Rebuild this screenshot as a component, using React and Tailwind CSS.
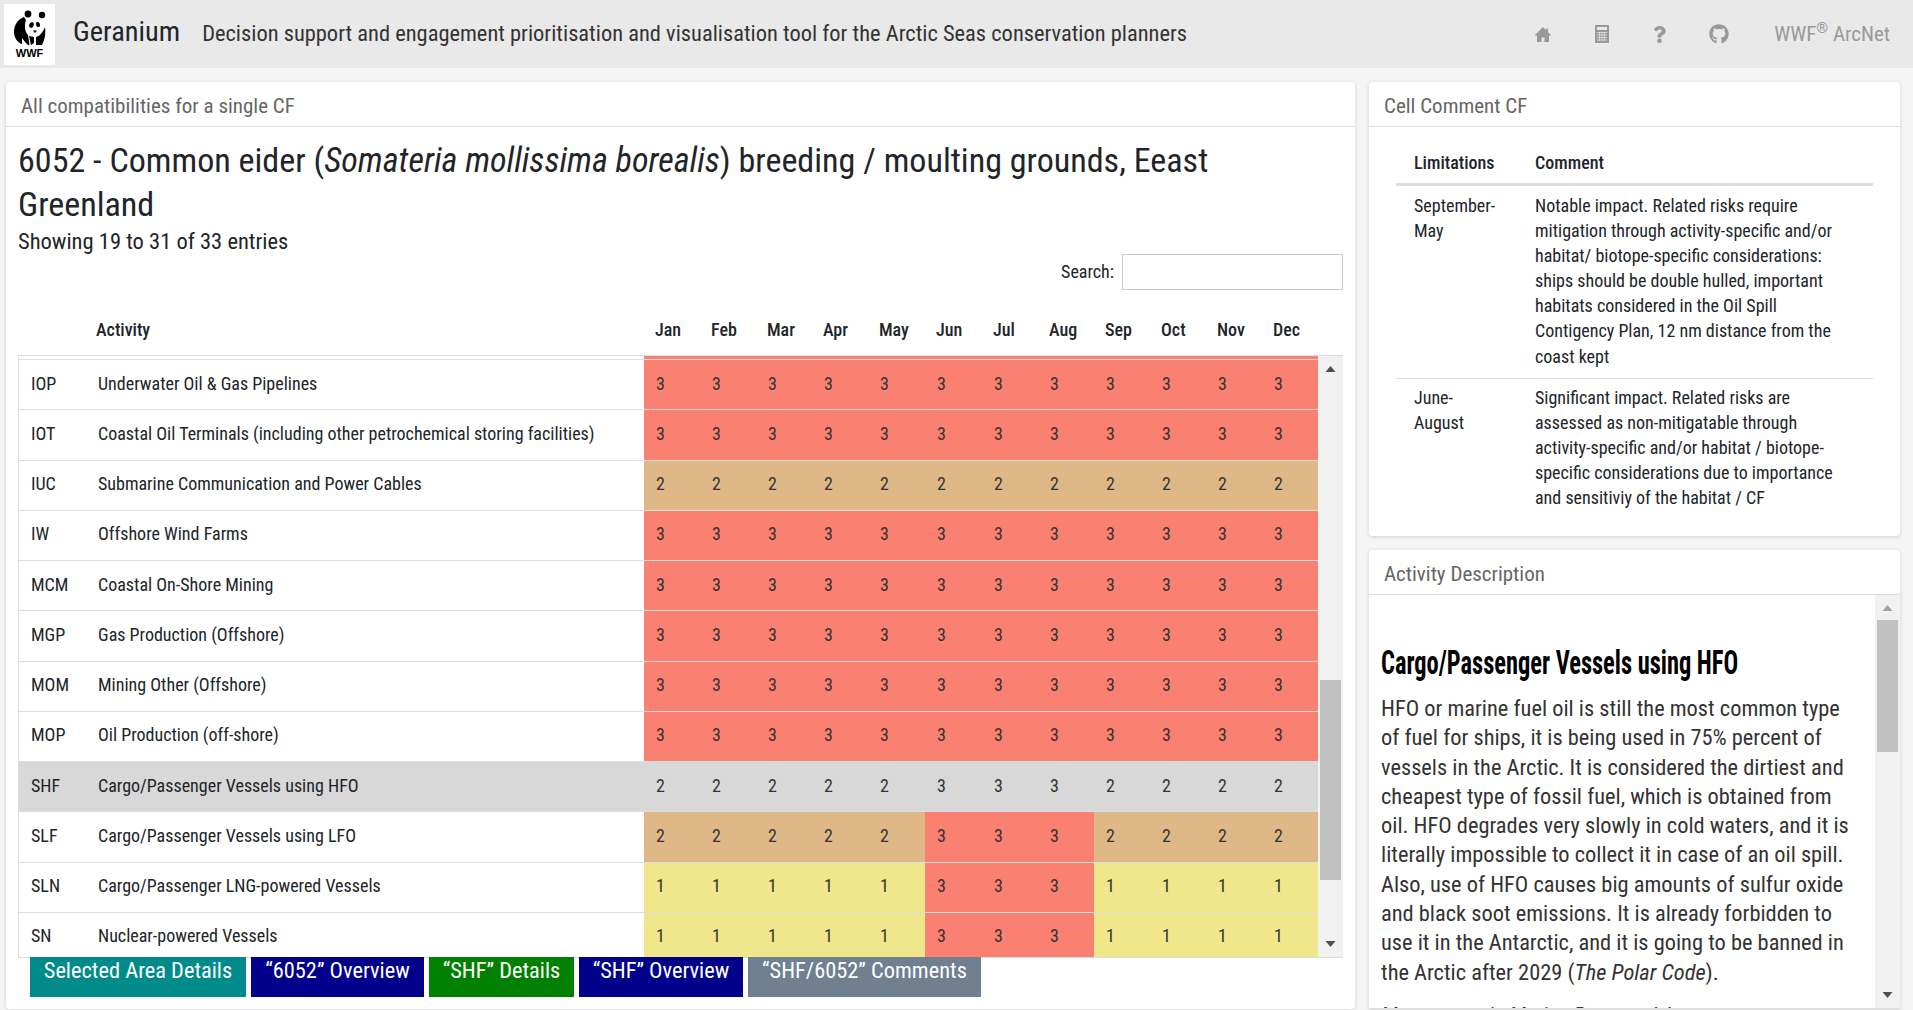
import React from "react";
import { FaQuestion, FaGithub } from "react-icons/fa";

const months = ["Jan","Feb","Mar","Apr","May","Jun","Jul","Aug","Sep","Oct","Nov","Dec"];
const monthW = ["w-[56px]","w-[56px]","w-[56px]","w-[56px]","w-[57px]","w-[57px]","w-[56px]","w-[56px]","w-[56px]","w-[56px]","w-[56px]","w-[56px]"];
const rows = [
  ["IOP","Underwater Oil & Gas Pipelines",[3,3,3,3,3,3,3,3,3,3,3,3]],
  ["IOT","Coastal Oil Terminals (including other petrochemical storing facilities)",[3,3,3,3,3,3,3,3,3,3,3,3]],
  ["IUC","Submarine Communication and Power Cables",[2,2,2,2,2,2,2,2,2,2,2,2]],
  ["IW","Offshore Wind Farms",[3,3,3,3,3,3,3,3,3,3,3,3]],
  ["MCM","Coastal On-Shore Mining",[3,3,3,3,3,3,3,3,3,3,3,3]],
  ["MGP","Gas Production (Offshore)",[3,3,3,3,3,3,3,3,3,3,3,3]],
  ["MOM","Mining Other (Offshore)",[3,3,3,3,3,3,3,3,3,3,3,3]],
  ["MOP","Oil Production (off-shore)",[3,3,3,3,3,3,3,3,3,3,3,3]],
  ["SHF","Cargo/Passenger Vessels using HFO",[2,2,2,2,2,3,3,3,2,2,2,2],true],
  ["SLF","Cargo/Passenger Vessels using LFO",[2,2,2,2,2,3,3,3,2,2,2,2]],
  ["SLN","Cargo/Passenger LNG-powered Vessels",[1,1,1,1,1,3,3,3,1,1,1,1]],
  ["SN","Nuclear-powered Vessels",[1,1,1,1,1,3,3,3,1,1,1,1]],
];
const cellBg = { 1: "bg-[#f0e68c]", 2: "bg-[#deb887]", 3: "bg-[#fa8072]" };

function Panda() {
  return (
    <svg viewBox="0 0 51 61" className="w-[51px] h-[61px]">
      <g transform="translate(0 1)">
        <circle cx="24" cy="9" r="3.4" fill="#000" />
        <circle cx="38" cy="10" r="3.2" fill="#000" />
        <path d="M20 12C14 14 10 20 10 27C10 33 14 38 18 39L18 33C20 36 22 38 24 40L25.5 40L24 30C21 27 20 21 22 15Z" fill="#000" />
        <path d="M41 22C42 28 41 34 38 40L32 40L32 32C36 31 39 27 41 22Z" fill="#000" />
        <path d="M25 31L30 32L30 38L27 40Z" fill="#000" />
        <ellipse cx="27.5" cy="20" rx="2.2" ry="2.8" fill="#000" transform="rotate(20 27.5 20)" />
        <ellipse cx="34" cy="19.5" rx="2" ry="2.6" fill="#000" transform="rotate(-20 34 19.5)" />
        <path d="M29 25.5h4l-2 2.6z" fill="#000" />
      </g>
      <text x="25.5" y="53" textAnchor="middle" fontSize="11" fontWeight="900" fontFamily="'Liberation Sans',sans-serif" fill="#000">WWF</text>
    </svg>
  );
}

function HomeIcon() {
  return (
    <svg viewBox="0 0 16 15" className="w-[16px] h-[15px]">
      <path d="M8 0L11 3V1.5H13V5L16 8L15 9L14 8.2V15H9.5V10.5H6.5V15H2V8.2L1 9L0 8Z" fill="currentColor" />
    </svg>
  );
}

function CalcIcon() {
  return (
    <svg viewBox="0 0 14 18" className="w-[14px] h-[18px]">
      <rect width="14" height="18" fill="currentColor" />
      <rect x="2" y="2" width="10" height="3" fill="#e9e9e9" />
      <path d="M2 7.5H12M2 10H12M2 12.5H12M2 15H12M4.5 7V16M7 7V16M9.5 7V16" stroke="#e0e0e0" strokeWidth="0.8" />
    </svg>
  );
}

function Arrow({ dir, className }) {
  return (
    <svg viewBox="0 0 10 6" className={"w-[11px] h-[6px] shrink-0 " + className}>
      <path d={dir === "up" ? "M5 0L10 6H0Z" : "M0 0H10L5 6Z"} fill="currentColor" />
    </svg>
  );
}

function CardHeader({ children }) {
  return <div className="h-[45px] pl-[15px] pt-[6px] flex items-center border-b border-[#dddddd] text-[21px] text-[#666666] shrink-0">{children}</div>;
}

export default function App() {
  return (
    <div className="h-[1010px] overflow-hidden bg-[#f5f5f5] text-[#212529] font-['Roboto','Noto_Sans',sans-serif] [font-stretch:75%]">
      <header className="h-[68px] bg-[#e9e9e9] flex items-center">
        <div className="ml-[4px] w-[51px] h-[61px] bg-white flex items-center justify-center shrink-0"><Panda /></div>
        <span className="ml-[18px] text-[28.4px] leading-none text-[#212529] relative -top-[2px]">Geranium</span>
        <span className="ml-[22px] text-[22.45px] leading-none text-[#333333] relative -top-[1px]">Decision support and engagement prioritisation and visualisation tool for the Arctic Seas conservation planners</span>
        <div className="ml-auto mr-[23px] flex items-center text-[#999999]">
          <HomeIcon />
          <div className="ml-[44px]"><CalcIcon /></div>
          <FaQuestion className="ml-[44px] w-[13px] h-[17px]" />
          <FaGithub className="ml-[43px] w-[20px] h-[20px]" />
          <span className="ml-[45px] text-[21px] leading-none">WWF<sup className="text-[15px] relative -top-[8px] align-baseline">®</sup> ArcNet</span>
        </div>
      </header>

      <div className="flex gap-[14px] pl-[6px] pt-[14px]">
        <section className="w-[1349px] h-[927px] bg-white rounded-[4px] shadow-[0_1px_4px_rgba(0,0,0,0.15)] flex flex-col shrink-0">
          <CardHeader>All compatibilities for a single CF</CardHeader>
          <div className="flex flex-col min-h-0 flex-1 pl-[12px] pr-[12px]">
            <h1 className="mt-[11px] text-[34.1px] leading-[44px] text-[#212529]">6052 - Common eider (<i>Somateria mollissima borealis</i>) breeding / moulting grounds, Eeast Greenland</h1>
            <div className="text-[22.5px] leading-[28px] mt-[1px]">Showing 19 to 31 of 33 entries</div>
            <div className="flex justify-end items-center h-[36px] -mt-[1px]">
              <label className="text-[18px] mr-[8px] pb-[2px]">Search:</label>
              <input className="w-[221px] h-[36px] border border-[#cccccc] bg-white" />
            </div>
            <div className="flex h-[66px] pt-[13px] border-b border-[#dddddd] shrink-0 text-[18px] font-medium text-[#212529] items-center">
              <div className="w-[78px] shrink-0" />
              <div className="w-[548px] shrink-0">Activity</div>
              {months.map((m, i) => <div key={m} className={monthW[i] + " shrink-0 pl-[11px] whitespace-nowrap"}>{m}</div>)}
            </div>
            <div className="flex h-[602px] shrink-0 border-l border-b border-[#dddddd]">
              <div className="w-[1299px] shrink-0 overflow-hidden">
                <div className="h-[3px] pl-[625px]"><div className="h-[3px] w-[674px] bg-[#fa8072]" /></div>
                {rows.map(([code, name, vals, sel]) => (
                  <div key={code} className={"flex h-[50.25px] border-t border-[#dddddd] text-[18px] " + (sel ? "bg-[#d8d8d8]" : "")}>
                    <div className="w-[78px] pl-[12px] pb-[3px] flex items-center shrink-0">{code}</div>
                    <div className="w-[547px] pl-[1px] pb-[3px] flex items-center shrink-0 whitespace-nowrap">{name}</div>
                    {vals.map((v, i) => (
                      <div key={i} className={monthW[i] + " shrink-0 pl-[12px] pb-[3px] flex items-center text-[#333333] " + (sel ? "" : cellBg[v])}>{v}</div>
                    ))}
                  </div>
                ))}
              </div>
              <div className="w-[25px] bg-[#f1f1f1] flex flex-col items-center shrink-0">
                <Arrow dir="up" className="mt-[10px] text-[#505050]" />
                <div className="w-[21px] h-[200px] mt-[308px] bg-[#c1c1c1] shrink-0" />
                <Arrow dir="down" className="mt-auto mb-[10px] text-[#505050]" />
              </div>
            </div>
            <div className="flex gap-[5px] pl-[12px] h-[40px] shrink-0 -mt-[1px] text-[22.4px] leading-[26px] text-white whitespace-nowrap">
              <div className="w-[216px] bg-[#008b8b] text-center">Selected Area Details</div>
              <div className="w-[173px] bg-[#00008b] text-center">“6052” Overview</div>
              <div className="w-[145px] bg-[#008000] text-center">“SHF” Details</div>
              <div className="w-[164px] bg-[#00008b] text-center">“SHF” Overview</div>
              <div className="w-[233px] bg-[#708090] text-center">“SHF/6052” Comments</div>
            </div>
          </div>
        </section>

        <div className="w-[531px] shrink-0 flex flex-col gap-[14px]">
          <section className="h-[454px] bg-white rounded-[4px] shadow-[0_1px_4px_rgba(0,0,0,0.15)] flex flex-col shrink-0">
            <CardHeader>Cell Comment CF</CardHeader>
            <div className="mx-[27px] mt-[10px] text-[18px] leading-[25.1px] text-[#212529]">
              <div className="flex font-medium border-b-[3px] border-[#dddddd] h-[49px] pt-[5px] items-center">
                <div className="w-[139px] pl-[18px] shrink-0">Limitations</div>
                <div>Comment</div>
              </div>
              <div className="flex border-b border-[#dddddd] pt-[7px] pb-[9px]">
                <div className="w-[139px] pl-[18px] pr-[36px] shrink-0">September-May</div>
                <div className="flex-1 pr-[28px]">Notable impact. Related risks require mitigation through activity-specific and/or habitat/ biotope-specific considerations: ships should be double hulled, important habitats considered in the Oil Spill Contigency Plan, 12 nm distance from the coast kept</div>
              </div>
              <div className="flex pt-[6px]">
                <div className="w-[139px] pl-[18px] pr-[36px] shrink-0">June-August</div>
                <div className="flex-1 pr-[28px]">Significant impact. Related risks are assessed as non-mitigatable through activity-specific and/or habitat / biotope-specific considerations due to importance and sensitiviy of the habitat / CF</div>
              </div>
            </div>
          </section>
          <section className="h-[459px] bg-white rounded-t-[4px] border-b border-[#dddddd] shadow-[0_1px_4px_rgba(0,0,0,0.15)] flex flex-col shrink-0 overflow-hidden">
            <CardHeader>Activity Description</CardHeader>
            <div className="flex flex-1 min-h-0">
              <div className="flex-1 min-w-0 pl-[12px] pr-[15px] pt-[48px] overflow-hidden">
                <h2 className="text-[33px] leading-[40px] font-bold text-black scale-x-[0.74] origin-left whitespace-nowrap">Cargo/Passenger Vessels using HFO</h2>
                <p className="mt-[11px] text-[22.4px] leading-[29.3px] text-[#333333]">HFO or marine fuel oil is still the most common type of fuel for ships, it is being used in 75% percent of vessels in the Arctic. It is considered the dirtiest and cheapest type of fossil fuel, which is obtained from oil. HFO degrades very slowly in cold waters, and it is literally impossible to collect it in case of an oil spill. Also, use of HFO causes big amounts of sulfur oxide and black soot emissions. It is already forbidden to use it in the Antarctic, and it is going to be banned in the Arctic after 2029 (<i>The Polar Code</i>).</p>
                <p className="mt-[14px] text-[22.4px] leading-[29.3px] text-[#333333] italic whitespace-nowrap">Most recent in Marine Protected Areas</p>
              </div>
              <div className="w-[25px] bg-[#f1f1f1] flex flex-col items-center shrink-0">
                <Arrow dir="up" className="mt-[10px] text-[#a3a3a3]" />
                <div className="w-[21px] h-[132px] mt-[9px] bg-[#c1c1c1] shrink-0" />
                <Arrow dir="down" className="mt-auto mb-[10px] text-[#505050]" />
              </div>
            </div>
          </section>
        </div>
      </div>
    </div>
  );
}
